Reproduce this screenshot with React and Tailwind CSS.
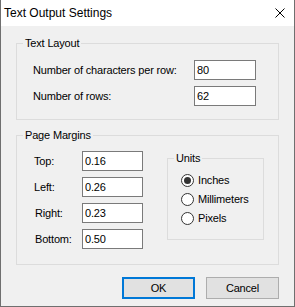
import React from 'react';

const ui = "font-['Liberation_Sans',Arial,sans-serif]";

function Field({ label, value, labelW, inputW }) {
  return (
    <div className="flex items-center h-[20px]">
      <span className={labelW}>{label}</span>
      <input
        readOnly
        value={value}
        className={`${inputW} h-[20px] border border-[#7a7a7a] bg-white px-[2px] text-[11px] tracking-[-0.15px] outline-none ${ui}`}
      />
    </div>
  );
}

function Radio({ label, checked }) {
  return (
    <div className="flex items-center h-[19px]">
      <span className="w-[13px] h-[13px] rounded-full border border-[#333333] bg-white flex items-center justify-center">
        {checked && <span className="w-[7px] h-[7px] rounded-full bg-[#333333]" />}
      </span>
      <span className="ml-[4px]">{label}</span>
    </div>
  );
}

export default function App() {
  return (
    <div className={`w-[295px] h-[307px] flex flex-col border-x border-b border-[#6f6f6f] bg-[#f0f0f0] text-black text-[11px] tracking-[-0.17px] ${ui}`}>
      {/* Title bar */}
      <div className="h-[26px] shrink-0 bg-white flex items-center justify-between pl-[3px] pr-[9px]">
        <span className="text-[12px] tracking-normal">Text Output Settings</span>
        <svg width="10" height="10" viewBox="0 0 10 10">
          <path d="M0.5 0.5 L9.5 9.5 M9.5 0.5 L0.5 9.5" stroke="#000" strokeWidth="1" fill="none" />
        </svg>
      </div>

      {/* Client area */}
      <div className="flex-1 flex flex-col px-[15px]">
        <fieldset className="mt-[11px] p-0 m-0 border border-[#dcdcdc] pb-[13px]">
          <legend className="ml-[6px] px-[2px] leading-[13px]">Text Layout</legend>
          <div className="flex flex-col gap-[6px] mt-[10px] pl-[16px]">
            <Field label="Number of characters per row:" value="80" labelW="w-[161px]" inputW="w-[62px]" />
            <Field label="Number of rows:" value="62" labelW="w-[161px]" inputW="w-[62px]" />
          </div>
        </fieldset>

        <fieldset className="mt-[9px] p-0 m-0 border border-[#dcdcdc] pb-[15px]">
          <legend className="ml-[6px] px-[2px] leading-[13px]">Page Margins</legend>
          <div className="flex pl-[17px]">
            <div className="flex flex-col gap-[6px] mt-[9px]">
              <Field label="Top:" value="0.16" labelW="w-[48px]" inputW="w-[61px]" />
              <Field label="Left:" value="0.26" labelW="w-[48px]" inputW="w-[61px]" />
              <Field label="Right:" value="0.23" labelW="w-[48px] pl-[1px]" inputW="w-[61px]" />
              <Field label="Bottom:" value="0.50" labelW="w-[48px] pl-[1px]" inputW="w-[61px]" />
            </div>
            <fieldset className="ml-[24px] mt-[10px] w-[97px] h-[88px] p-0 border border-[#dcdcdc]">
              <legend className="ml-[6px] px-[2px] leading-[13px]">Units</legend>
              <div className="flex flex-col pt-[6px] pl-[13px]">
                <Radio label="Inches" checked />
                <Radio label="Millimeters" />
                <Radio label="Pixels" />
              </div>
            </fieldset>
          </div>
        </fieldset>

        <div className="mt-[12px] flex justify-end gap-[11px]">
          <button className="w-[73px] h-[22px] border-2 border-[#0078d7] bg-[#e1e1e1] text-[11px]">OK</button>
          <button className="w-[73px] h-[22px] border border-[#adadad] bg-[#e1e1e1] text-[11px]">Cancel</button>
        </div>
      </div>
    </div>
  );
}
